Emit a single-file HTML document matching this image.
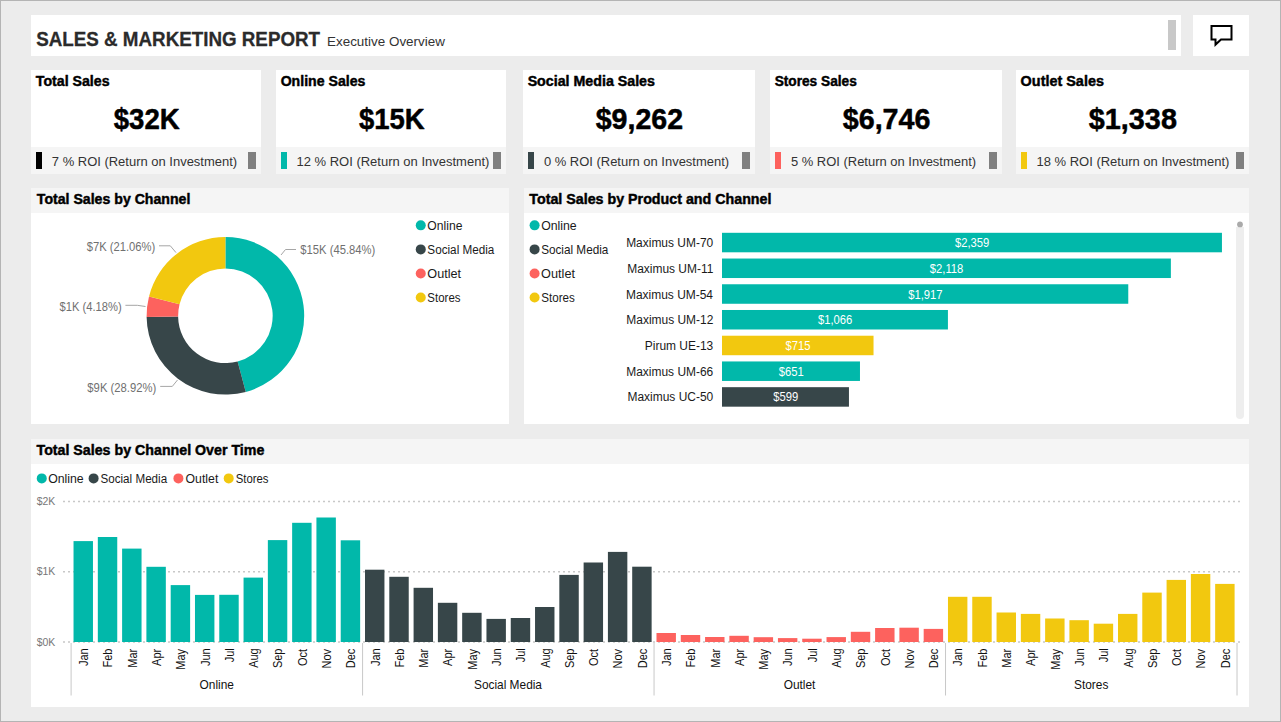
<!DOCTYPE html>
<html><head><meta charset="utf-8"><title>Sales &amp; Marketing Report</title>
<style>
html,body{margin:0;padding:0;}
body{width:1281px;height:722px;overflow:hidden;background:#ECECEC;position:relative;}
svg{position:absolute;left:0;top:0;display:block;}
text{font-family:"Liberation Sans", sans-serif;}
</style></head><body>
<svg width="1281" height="722" viewBox="0 0 1281 722" shape-rendering="crispEdges">
<rect x="0" y="0" width="1281" height="722" fill="#ECECEC"/>
<rect x="0.5" y="0.5" width="1280" height="721" fill="none" stroke="#B4B4B4" stroke-width="1"/>
<rect x="31" y="15" width="1150" height="41" fill="#FFFFFF"/>
<rect x="1168" y="20" width="8" height="30" fill="#C8C8C8"/>
<rect x="1193" y="15" width="56" height="41" fill="#FFFFFF"/>
<path d="M1211.5 26 H1231.5 V39.5 H1221 L1215.5 44.6 V39.5 H1211.5 Z" fill="none" stroke="#000" stroke-width="2" stroke-linejoin="miter" shape-rendering="geometricPrecision"/>
<rect x="31" y="70" width="230" height="77" fill="#FFFFFF"/>
<rect x="31" y="147" width="230" height="27" fill="#F5F5F5"/>
<rect x="36" y="152" width="6" height="17" fill="#000000"/>
<rect x="248" y="152" width="8" height="17" fill="#808080"/>
<rect x="276" y="70" width="230" height="77" fill="#FFFFFF"/>
<rect x="276" y="147" width="230" height="27" fill="#F5F5F5"/>
<rect x="281" y="152" width="6" height="17" fill="#01B8AA"/>
<rect x="493" y="152" width="8" height="17" fill="#808080"/>
<rect x="523" y="70" width="232" height="77" fill="#FFFFFF"/>
<rect x="523" y="147" width="232" height="27" fill="#F5F5F5"/>
<rect x="528" y="152" width="6" height="17" fill="#374649"/>
<rect x="742" y="152" width="8" height="17" fill="#808080"/>
<rect x="770" y="70" width="232" height="77" fill="#FFFFFF"/>
<rect x="770" y="147" width="232" height="27" fill="#F5F5F5"/>
<rect x="775" y="152" width="6" height="17" fill="#FD625E"/>
<rect x="989" y="152" width="8" height="17" fill="#808080"/>
<rect x="1016" y="70" width="233" height="77" fill="#FFFFFF"/>
<rect x="1016" y="147" width="233" height="27" fill="#F5F5F5"/>
<rect x="1021" y="152" width="6" height="17" fill="#F2C80F"/>
<rect x="1236" y="152" width="8" height="17" fill="#808080"/>
<rect x="31" y="188" width="478" height="236" fill="#FFFFFF"/>
<rect x="31" y="188" width="478" height="25" fill="#F5F5F5"/>
<rect x="524" y="188" width="725" height="236" fill="#FFFFFF"/>
<rect x="524" y="188" width="725" height="25" fill="#F5F5F5"/>
<rect x="31" y="439" width="1218" height="268" fill="#FFFFFF"/>
<rect x="31" y="439" width="1218" height="25" fill="#F5F5F5"/>
<circle cx="420.75" cy="225.35" r="5.0" fill="#01B8AA" shape-rendering="geometricPrecision"/>
<circle cx="534.6" cy="225.35" r="5.0" fill="#01B8AA" shape-rendering="geometricPrecision"/>
<circle cx="420.75" cy="249.40" r="5.0" fill="#374649" shape-rendering="geometricPrecision"/>
<circle cx="534.6" cy="249.40" r="5.0" fill="#374649" shape-rendering="geometricPrecision"/>
<circle cx="420.75" cy="273.45" r="5.0" fill="#FD625E" shape-rendering="geometricPrecision"/>
<circle cx="534.6" cy="273.45" r="5.0" fill="#FD625E" shape-rendering="geometricPrecision"/>
<circle cx="420.75" cy="297.50" r="5.0" fill="#F2C80F" shape-rendering="geometricPrecision"/>
<circle cx="534.6" cy="297.50" r="5.0" fill="#F2C80F" shape-rendering="geometricPrecision"/>
<path d="M225.40 237.00 A78.8 78.8 0 0 1 245.76 391.92 L237.62 361.49 A47.3 47.3 0 0 0 225.40 268.50 Z" fill="#01B8AA" shape-rendering="geometricPrecision"/>
<path d="M245.76 391.92 A78.8 78.8 0 0 1 146.61 316.99 L178.11 316.51 A47.3 47.3 0 0 0 237.62 361.49 Z" fill="#374649" shape-rendering="geometricPrecision"/>
<path d="M146.61 316.99 A78.8 78.8 0 0 1 149.00 296.49 L179.54 304.21 A47.3 47.3 0 0 0 178.11 316.51 Z" fill="#FD625E" shape-rendering="geometricPrecision"/>
<path d="M149.00 296.49 A78.8 78.8 0 0 1 225.40 237.00 L225.40 268.50 A47.3 47.3 0 0 0 179.54 304.21 Z" fill="#F2C80F" shape-rendering="geometricPrecision"/>
<g fill="none" stroke="#A6A6A6" stroke-width="1" shape-rendering="geometricPrecision">
<polyline points="281,255 285.5,249.5 296,249.5"/>
<polyline points="159,245.8 170.3,245.8 176,252.6"/>
<polyline points="125.4,305.3 137.3,305.3 145.5,306.5"/>
<polyline points="160.2,386.4 172.3,386.4 177.5,380"/>
</g>
<rect x="722" y="232.80" width="499.94" height="19.5" fill="#01B8AA" shape-rendering="geometricPrecision"/>
<rect x="722" y="258.53" width="448.87" height="19.5" fill="#01B8AA" shape-rendering="geometricPrecision"/>
<rect x="722" y="284.26" width="406.27" height="19.5" fill="#01B8AA" shape-rendering="geometricPrecision"/>
<rect x="722" y="309.99" width="225.92" height="19.5" fill="#01B8AA" shape-rendering="geometricPrecision"/>
<rect x="722" y="335.72" width="151.53" height="19.5" fill="#F2C80F" shape-rendering="geometricPrecision"/>
<rect x="722" y="361.45" width="137.97" height="19.5" fill="#01B8AA" shape-rendering="geometricPrecision"/>
<rect x="722" y="387.18" width="126.95" height="19.5" fill="#374649" shape-rendering="geometricPrecision"/>
<rect x="1236" y="227" width="8" height="192" rx="4" ry="4" fill="#EEEEEE" shape-rendering="geometricPrecision"/>
<rect x="1236" y="227" width="8" height="8" fill="#EEEEEE"/>
<circle cx="1240" cy="224.4" r="2.9" fill="#AAAAAA" shape-rendering="geometricPrecision"/>
<circle cx="41.75" cy="478.4" r="5.0" fill="#01B8AA" shape-rendering="geometricPrecision"/>
<circle cx="93.6" cy="478.4" r="5.0" fill="#374649" shape-rendering="geometricPrecision"/>
<circle cx="178.4" cy="478.4" r="5.0" fill="#FD625E" shape-rendering="geometricPrecision"/>
<circle cx="228.7" cy="478.4" r="5.0" fill="#F2C80F" shape-rendering="geometricPrecision"/>
<line x1="63" y1="501.5" x2="1241" y2="501.5" stroke="#C8C8C8" stroke-width="1.5" stroke-dasharray="2 3" shape-rendering="geometricPrecision"/>
<line x1="63" y1="571.75" x2="1241" y2="571.75" stroke="#C8C8C8" stroke-width="1.5" stroke-dasharray="2 3" shape-rendering="geometricPrecision"/>
<line x1="63" y1="642" x2="1241" y2="642" stroke="#C8C8C8" stroke-width="1.5" stroke-dasharray="2 3" shape-rendering="geometricPrecision"/>
<rect x="73.53" y="541.10" width="19.43" height="100.90" fill="#01B8AA" shape-rendering="geometricPrecision"/>
<rect x="97.82" y="537.00" width="19.43" height="105.00" fill="#01B8AA" shape-rendering="geometricPrecision"/>
<rect x="122.11" y="548.60" width="19.43" height="93.40" fill="#01B8AA" shape-rendering="geometricPrecision"/>
<rect x="146.40" y="566.80" width="19.43" height="75.20" fill="#01B8AA" shape-rendering="geometricPrecision"/>
<rect x="170.69" y="585.10" width="19.43" height="56.90" fill="#01B8AA" shape-rendering="geometricPrecision"/>
<rect x="194.98" y="594.90" width="19.43" height="47.10" fill="#01B8AA" shape-rendering="geometricPrecision"/>
<rect x="219.27" y="594.80" width="19.43" height="47.20" fill="#01B8AA" shape-rendering="geometricPrecision"/>
<rect x="243.56" y="577.60" width="19.43" height="64.40" fill="#01B8AA" shape-rendering="geometricPrecision"/>
<rect x="267.85" y="540.10" width="19.43" height="101.90" fill="#01B8AA" shape-rendering="geometricPrecision"/>
<rect x="292.14" y="522.80" width="19.43" height="119.20" fill="#01B8AA" shape-rendering="geometricPrecision"/>
<rect x="316.43" y="517.50" width="19.43" height="124.50" fill="#01B8AA" shape-rendering="geometricPrecision"/>
<rect x="340.72" y="540.30" width="19.43" height="101.70" fill="#01B8AA" shape-rendering="geometricPrecision"/>
<rect x="365.01" y="569.70" width="19.43" height="72.30" fill="#374649" shape-rendering="geometricPrecision"/>
<rect x="389.30" y="576.80" width="19.43" height="65.20" fill="#374649" shape-rendering="geometricPrecision"/>
<rect x="413.59" y="587.80" width="19.43" height="54.20" fill="#374649" shape-rendering="geometricPrecision"/>
<rect x="437.88" y="602.80" width="19.43" height="39.20" fill="#374649" shape-rendering="geometricPrecision"/>
<rect x="462.17" y="612.80" width="19.43" height="29.20" fill="#374649" shape-rendering="geometricPrecision"/>
<rect x="486.46" y="618.90" width="19.43" height="23.10" fill="#374649" shape-rendering="geometricPrecision"/>
<rect x="510.75" y="618.00" width="19.43" height="24.00" fill="#374649" shape-rendering="geometricPrecision"/>
<rect x="535.04" y="607.00" width="19.43" height="35.00" fill="#374649" shape-rendering="geometricPrecision"/>
<rect x="559.33" y="574.90" width="19.43" height="67.10" fill="#374649" shape-rendering="geometricPrecision"/>
<rect x="583.62" y="562.50" width="19.43" height="79.50" fill="#374649" shape-rendering="geometricPrecision"/>
<rect x="607.91" y="551.90" width="19.43" height="90.10" fill="#374649" shape-rendering="geometricPrecision"/>
<rect x="632.20" y="566.70" width="19.43" height="75.30" fill="#374649" shape-rendering="geometricPrecision"/>
<rect x="656.49" y="633.00" width="19.43" height="9.00" fill="#FD625E" shape-rendering="geometricPrecision"/>
<rect x="680.78" y="635.00" width="19.43" height="7.00" fill="#FD625E" shape-rendering="geometricPrecision"/>
<rect x="705.07" y="637.00" width="19.43" height="5.00" fill="#FD625E" shape-rendering="geometricPrecision"/>
<rect x="729.36" y="635.80" width="19.43" height="6.20" fill="#FD625E" shape-rendering="geometricPrecision"/>
<rect x="753.65" y="637.20" width="19.43" height="4.80" fill="#FD625E" shape-rendering="geometricPrecision"/>
<rect x="777.94" y="638.10" width="19.43" height="3.90" fill="#FD625E" shape-rendering="geometricPrecision"/>
<rect x="802.23" y="638.70" width="19.43" height="3.30" fill="#FD625E" shape-rendering="geometricPrecision"/>
<rect x="826.52" y="637.10" width="19.43" height="4.90" fill="#FD625E" shape-rendering="geometricPrecision"/>
<rect x="850.81" y="631.80" width="19.43" height="10.20" fill="#FD625E" shape-rendering="geometricPrecision"/>
<rect x="875.10" y="628.00" width="19.43" height="14.00" fill="#FD625E" shape-rendering="geometricPrecision"/>
<rect x="899.39" y="627.70" width="19.43" height="14.30" fill="#FD625E" shape-rendering="geometricPrecision"/>
<rect x="923.68" y="628.90" width="19.43" height="13.10" fill="#FD625E" shape-rendering="geometricPrecision"/>
<rect x="947.97" y="596.80" width="19.43" height="45.20" fill="#F2C80F" shape-rendering="geometricPrecision"/>
<rect x="972.26" y="596.80" width="19.43" height="45.20" fill="#F2C80F" shape-rendering="geometricPrecision"/>
<rect x="996.55" y="612.50" width="19.43" height="29.50" fill="#F2C80F" shape-rendering="geometricPrecision"/>
<rect x="1020.84" y="613.90" width="19.43" height="28.10" fill="#F2C80F" shape-rendering="geometricPrecision"/>
<rect x="1045.13" y="618.50" width="19.43" height="23.50" fill="#F2C80F" shape-rendering="geometricPrecision"/>
<rect x="1069.42" y="620.20" width="19.43" height="21.80" fill="#F2C80F" shape-rendering="geometricPrecision"/>
<rect x="1093.71" y="623.70" width="19.43" height="18.30" fill="#F2C80F" shape-rendering="geometricPrecision"/>
<rect x="1118.00" y="613.90" width="19.43" height="28.10" fill="#F2C80F" shape-rendering="geometricPrecision"/>
<rect x="1142.29" y="592.60" width="19.43" height="49.40" fill="#F2C80F" shape-rendering="geometricPrecision"/>
<rect x="1166.58" y="579.90" width="19.43" height="62.10" fill="#F2C80F" shape-rendering="geometricPrecision"/>
<rect x="1190.87" y="574.00" width="19.43" height="68.00" fill="#F2C80F" shape-rendering="geometricPrecision"/>
<rect x="1215.16" y="583.90" width="19.43" height="58.10" fill="#F2C80F" shape-rendering="geometricPrecision"/>
<line x1="71.10" y1="643" x2="71.10" y2="695.5" stroke="#C8C8C8" stroke-width="1" shape-rendering="geometricPrecision"/>
<line x1="362.58" y1="643" x2="362.58" y2="695.5" stroke="#C8C8C8" stroke-width="1" shape-rendering="geometricPrecision"/>
<line x1="654.06" y1="643" x2="654.06" y2="695.5" stroke="#C8C8C8" stroke-width="1" shape-rendering="geometricPrecision"/>
<line x1="945.54" y1="643" x2="945.54" y2="695.5" stroke="#C8C8C8" stroke-width="1" shape-rendering="geometricPrecision"/>
<line x1="1237.02" y1="643" x2="1237.02" y2="695.5" stroke="#C8C8C8" stroke-width="1" shape-rendering="geometricPrecision"/>
<text transform="translate(36.27,45.60) scale(0.9368,1)" font-size="20.058" font-weight="bold" fill="#2B2B2B" stroke="#2B2B2B" stroke-width="0.3" stroke-linejoin="round">SALES &amp; MARKETING REPORT</text>
<text transform="translate(327.03,45.60) scale(0.9887,1)" font-size="13.590" font-weight="normal" fill="#333333">Executive Overview</text>
<text transform="translate(35.81,85.90) scale(0.9746,1)" font-size="14.535" font-weight="bold" fill="#000000" stroke="#000000" stroke-width="0.45" stroke-linejoin="round">Total Sales</text>
<text transform="translate(113.73,129.10) scale(0.9398,1)" font-size="29.360" font-weight="bold" fill="#000000" stroke="#000000" stroke-width="0.5" stroke-linejoin="round">$32K</text>
<text transform="translate(51.81,165.60) scale(0.9934,1)" font-size="13.081" font-weight="normal" fill="#333333">7 % ROI (Return on Investment)</text>
<text transform="translate(280.64,85.90) scale(0.9716,1)" font-size="14.535" font-weight="bold" fill="#000000" stroke="#000000" stroke-width="0.45" stroke-linejoin="round">Online Sales</text>
<text transform="translate(358.93,129.10) scale(0.9354,1)" font-size="29.360" font-weight="bold" fill="#000000" stroke="#000000" stroke-width="0.5" stroke-linejoin="round">$15K</text>
<text transform="translate(296.45,165.60) scale(0.9949,1)" font-size="13.081" font-weight="normal" fill="#333333">12 % ROI (Return on Investment)</text>
<text transform="translate(527.63,85.90) scale(0.9793,1)" font-size="14.535" font-weight="bold" fill="#000000" stroke="#000000" stroke-width="0.45" stroke-linejoin="round">Social Media Sales</text>
<text transform="translate(595.72,129.10) scale(0.9731,1)" font-size="29.360" font-weight="bold" fill="#000000" stroke="#000000" stroke-width="0.5" stroke-linejoin="round">$9,262</text>
<text transform="translate(543.88,165.60) scale(0.9925,1)" font-size="13.081" font-weight="normal" fill="#333333">0 % ROI (Return on Investment)</text>
<text transform="translate(774.64,85.90) scale(0.9426,1)" font-size="14.535" font-weight="bold" fill="#000000" stroke="#000000" stroke-width="0.45" stroke-linejoin="round">Stores Sales</text>
<text transform="translate(842.72,129.10) scale(0.9776,1)" font-size="29.360" font-weight="bold" fill="#000000" stroke="#000000" stroke-width="0.5" stroke-linejoin="round">$6,746</text>
<text transform="translate(790.88,165.60) scale(0.9925,1)" font-size="13.081" font-weight="normal" fill="#333333">5 % ROI (Return on Investment)</text>
<text transform="translate(1020.62,85.90) scale(0.9922,1)" font-size="14.535" font-weight="bold" fill="#000000" stroke="#000000" stroke-width="0.45" stroke-linejoin="round">Outlet Sales</text>
<text transform="translate(1088.82,129.10) scale(0.9811,1)" font-size="29.360" font-weight="bold" fill="#000000" stroke="#000000" stroke-width="0.5" stroke-linejoin="round">$1,338</text>
<text transform="translate(1036.45,165.60) scale(0.9949,1)" font-size="13.081" font-weight="normal" fill="#333333">18 % ROI (Return on Investment)</text>
<text transform="translate(36.81,203.70) scale(0.9720,1)" font-size="14.535" font-weight="bold" fill="#000000" stroke="#000000" stroke-width="0.45" stroke-linejoin="round">Total Sales by Channel</text>
<text transform="translate(529.31,203.70) scale(0.9815,1)" font-size="14.535" font-weight="bold" fill="#000000" stroke="#000000" stroke-width="0.45" stroke-linejoin="round">Total Sales by Product and Channel</text>
<text transform="translate(36.51,454.90) scale(0.9786,1)" font-size="14.535" font-weight="bold" fill="#000000" stroke="#000000" stroke-width="0.45" stroke-linejoin="round">Total Sales by Channel Over Time</text>
<text transform="translate(427.33,229.95) scale(0.9130,1)" font-size="13.299" font-weight="normal" fill="#1A1A1A">Online</text>
<text transform="translate(541.13,229.95) scale(0.9238,1)" font-size="13.299" font-weight="normal" fill="#1A1A1A">Online</text>
<text transform="translate(427.35,254.00) scale(0.8816,1)" font-size="13.299" font-weight="normal" fill="#1A1A1A">Social Media</text>
<text transform="translate(541.15,254.00) scale(0.8830,1)" font-size="13.299" font-weight="normal" fill="#1A1A1A">Social Media</text>
<text transform="translate(427.31,278.05) scale(0.9524,1)" font-size="13.299" font-weight="normal" fill="#1A1A1A">Outlet</text>
<text transform="translate(541.11,278.05) scale(0.9552,1)" font-size="13.299" font-weight="normal" fill="#1A1A1A">Outlet</text>
<text transform="translate(427.36,302.10) scale(0.8626,1)" font-size="13.299" font-weight="normal" fill="#1A1A1A">Stores</text>
<text transform="translate(541.16,302.10) scale(0.8760,1)" font-size="13.299" font-weight="normal" fill="#1A1A1A">Stores</text>
<text transform="translate(300.35,253.80) scale(0.8787,1)" font-size="12.791" font-weight="normal" fill="#707070">$15K (45.84%)</text>
<text transform="translate(86.65,250.60) scale(0.8789,1)" font-size="12.791" font-weight="normal" fill="#707070">$7K (21.06%)</text>
<text transform="translate(59.55,310.70) scale(0.8746,1)" font-size="12.791" font-weight="normal" fill="#707070">$1K (4.18%)</text>
<text transform="translate(87.35,391.80) scale(0.8828,1)" font-size="12.791" font-weight="normal" fill="#707070">$9K (28.92%)</text>
<text transform="translate(626.14,247.05) scale(0.9000,1)" font-size="13.299" font-weight="normal" fill="#1A1A1A">Maximus UM-70</text>
<text transform="translate(954.94,247.05) scale(0.8900,1)" font-size="12.645" font-weight="normal" fill="#FFFFFF">$2,359</text>
<text transform="translate(627.18,272.78) scale(0.9000,1)" font-size="13.299" font-weight="normal" fill="#1A1A1A">Maximus UM-11</text>
<text transform="translate(929.81,272.78) scale(0.8900,1)" font-size="12.645" font-weight="normal" fill="#FFFFFF">$2,118</text>
<text transform="translate(625.98,298.51) scale(0.9000,1)" font-size="13.299" font-weight="normal" fill="#1A1A1A">Maximus UM-54</text>
<text transform="translate(908.14,298.51) scale(0.8900,1)" font-size="12.645" font-weight="normal" fill="#FFFFFF">$1,917</text>
<text transform="translate(626.30,324.24) scale(0.9000,1)" font-size="13.299" font-weight="normal" fill="#1A1A1A">Maximus UM-12</text>
<text transform="translate(817.93,324.24) scale(0.8900,1)" font-size="12.645" font-weight="normal" fill="#FFFFFF">$1,066</text>
<text transform="translate(644.81,349.97) scale(0.9000,1)" font-size="13.299" font-weight="normal" fill="#1A1A1A">Pirum UE-13</text>
<text transform="translate(785.42,349.97) scale(0.8900,1)" font-size="12.645" font-weight="normal" fill="#FFFFFF">$715</text>
<text transform="translate(626.22,375.70) scale(0.9000,1)" font-size="13.299" font-weight="normal" fill="#1A1A1A">Maximus UM-66</text>
<text transform="translate(778.68,375.70) scale(0.8900,1)" font-size="12.645" font-weight="normal" fill="#FFFFFF">$651</text>
<text transform="translate(627.50,401.43) scale(0.9000,1)" font-size="13.299" font-weight="normal" fill="#1A1A1A">Maximus UC-50</text>
<text transform="translate(773.13,401.43) scale(0.8900,1)" font-size="12.645" font-weight="normal" fill="#FFFFFF">$599</text>
<text transform="translate(48.18,483.00) scale(0.9251,1)" font-size="13.299" font-weight="normal" fill="#1A1A1A">Online</text>
<text transform="translate(100.46,483.00) scale(0.8763,1)" font-size="13.299" font-weight="normal" fill="#1A1A1A">Social Media</text>
<text transform="translate(185.53,483.00) scale(0.9236,1)" font-size="13.299" font-weight="normal" fill="#1A1A1A">Outlet</text>
<text transform="translate(235.67,483.00) scale(0.8546,1)" font-size="13.299" font-weight="normal" fill="#1A1A1A">Stores</text>
<text transform="translate(36.66,505.10) scale(0.9000,1)" font-size="11.628" font-weight="normal" fill="#777777">$2K</text>
<text transform="translate(36.66,575.35) scale(0.9000,1)" font-size="11.628" font-weight="normal" fill="#777777">$1K</text>
<text transform="translate(36.66,645.60) scale(0.9000,1)" font-size="11.628" font-weight="normal" fill="#777777">$0K</text>
<text transform="translate(88.04,649.00) rotate(-90) translate(-17.00,0) scale(0.8400,1)" font-size="13.081" font-weight="normal" fill="#111111">Jan</text>
<text transform="translate(112.33,649.00) rotate(-90) translate(-18.46,0) scale(0.8400,1)" font-size="13.081" font-weight="normal" fill="#111111">Feb</text>
<text transform="translate(136.62,649.00) rotate(-90) translate(-18.75,0) scale(0.8400,1)" font-size="13.081" font-weight="normal" fill="#111111">Mar</text>
<text transform="translate(160.92,649.00) rotate(-90) translate(-16.92,0) scale(0.8400,1)" font-size="13.081" font-weight="normal" fill="#111111">Apr</text>
<text transform="translate(185.21,649.00) rotate(-90) translate(-20.73,0) scale(0.8400,1)" font-size="13.081" font-weight="normal" fill="#111111">May</text>
<text transform="translate(209.50,649.00) rotate(-90) translate(-17.00,0) scale(0.8400,1)" font-size="13.081" font-weight="normal" fill="#111111">Jun</text>
<text transform="translate(233.79,649.00) rotate(-90) translate(-13.33,0) scale(0.8400,1)" font-size="13.081" font-weight="normal" fill="#111111">Jul</text>
<text transform="translate(258.07,649.00) rotate(-90) translate(-18.83,0) scale(0.8400,1)" font-size="13.081" font-weight="normal" fill="#111111">Aug</text>
<text transform="translate(282.36,649.00) rotate(-90) translate(-19.12,0) scale(0.8400,1)" font-size="13.081" font-weight="normal" fill="#111111">Sep</text>
<text transform="translate(306.65,649.00) rotate(-90) translate(-17.00,0) scale(0.8400,1)" font-size="13.081" font-weight="normal" fill="#111111">Oct</text>
<text transform="translate(330.94,649.00) rotate(-90) translate(-19.49,0) scale(0.8400,1)" font-size="13.081" font-weight="normal" fill="#111111">Nov</text>
<text transform="translate(355.23,649.00) rotate(-90) translate(-19.27,0) scale(0.8400,1)" font-size="13.081" font-weight="normal" fill="#111111">Dec</text>
<text transform="translate(199.62,689.20) scale(0.9200,1)" font-size="12.936" font-weight="normal" fill="#111111">Online</text>
<text transform="translate(379.53,649.00) rotate(-90) translate(-17.00,0) scale(0.8400,1)" font-size="13.081" font-weight="normal" fill="#111111">Jan</text>
<text transform="translate(403.81,649.00) rotate(-90) translate(-18.46,0) scale(0.8400,1)" font-size="13.081" font-weight="normal" fill="#111111">Feb</text>
<text transform="translate(428.10,649.00) rotate(-90) translate(-18.75,0) scale(0.8400,1)" font-size="13.081" font-weight="normal" fill="#111111">Mar</text>
<text transform="translate(452.39,649.00) rotate(-90) translate(-16.92,0) scale(0.8400,1)" font-size="13.081" font-weight="normal" fill="#111111">Apr</text>
<text transform="translate(476.69,649.00) rotate(-90) translate(-20.73,0) scale(0.8400,1)" font-size="13.081" font-weight="normal" fill="#111111">May</text>
<text transform="translate(500.97,649.00) rotate(-90) translate(-17.00,0) scale(0.8400,1)" font-size="13.081" font-weight="normal" fill="#111111">Jun</text>
<text transform="translate(525.26,649.00) rotate(-90) translate(-13.33,0) scale(0.8400,1)" font-size="13.081" font-weight="normal" fill="#111111">Jul</text>
<text transform="translate(549.55,649.00) rotate(-90) translate(-18.83,0) scale(0.8400,1)" font-size="13.081" font-weight="normal" fill="#111111">Aug</text>
<text transform="translate(573.84,649.00) rotate(-90) translate(-19.12,0) scale(0.8400,1)" font-size="13.081" font-weight="normal" fill="#111111">Sep</text>
<text transform="translate(598.13,649.00) rotate(-90) translate(-17.00,0) scale(0.8400,1)" font-size="13.081" font-weight="normal" fill="#111111">Oct</text>
<text transform="translate(622.42,649.00) rotate(-90) translate(-19.49,0) scale(0.8400,1)" font-size="13.081" font-weight="normal" fill="#111111">Nov</text>
<text transform="translate(646.71,649.00) rotate(-90) translate(-19.27,0) scale(0.8400,1)" font-size="13.081" font-weight="normal" fill="#111111">Dec</text>
<text transform="translate(473.97,689.20) scale(0.9200,1)" font-size="12.936" font-weight="normal" fill="#111111">Social Media</text>
<text transform="translate(671.00,649.00) rotate(-90) translate(-17.00,0) scale(0.8400,1)" font-size="13.081" font-weight="normal" fill="#111111">Jan</text>
<text transform="translate(695.29,649.00) rotate(-90) translate(-18.46,0) scale(0.8400,1)" font-size="13.081" font-weight="normal" fill="#111111">Feb</text>
<text transform="translate(719.58,649.00) rotate(-90) translate(-18.75,0) scale(0.8400,1)" font-size="13.081" font-weight="normal" fill="#111111">Mar</text>
<text transform="translate(743.87,649.00) rotate(-90) translate(-16.92,0) scale(0.8400,1)" font-size="13.081" font-weight="normal" fill="#111111">Apr</text>
<text transform="translate(768.16,649.00) rotate(-90) translate(-20.73,0) scale(0.8400,1)" font-size="13.081" font-weight="normal" fill="#111111">May</text>
<text transform="translate(792.45,649.00) rotate(-90) translate(-17.00,0) scale(0.8400,1)" font-size="13.081" font-weight="normal" fill="#111111">Jun</text>
<text transform="translate(816.74,649.00) rotate(-90) translate(-13.33,0) scale(0.8400,1)" font-size="13.081" font-weight="normal" fill="#111111">Jul</text>
<text transform="translate(841.03,649.00) rotate(-90) translate(-18.83,0) scale(0.8400,1)" font-size="13.081" font-weight="normal" fill="#111111">Aug</text>
<text transform="translate(865.32,649.00) rotate(-90) translate(-19.12,0) scale(0.8400,1)" font-size="13.081" font-weight="normal" fill="#111111">Sep</text>
<text transform="translate(889.61,649.00) rotate(-90) translate(-17.00,0) scale(0.8400,1)" font-size="13.081" font-weight="normal" fill="#111111">Oct</text>
<text transform="translate(913.90,649.00) rotate(-90) translate(-19.49,0) scale(0.8400,1)" font-size="13.081" font-weight="normal" fill="#111111">Nov</text>
<text transform="translate(938.19,649.00) rotate(-90) translate(-19.27,0) scale(0.8400,1)" font-size="13.081" font-weight="normal" fill="#111111">Dec</text>
<text transform="translate(783.69,689.20) scale(0.9200,1)" font-size="12.936" font-weight="normal" fill="#111111">Outlet</text>
<text transform="translate(962.48,649.00) rotate(-90) translate(-17.00,0) scale(0.8400,1)" font-size="13.081" font-weight="normal" fill="#111111">Jan</text>
<text transform="translate(986.77,649.00) rotate(-90) translate(-18.46,0) scale(0.8400,1)" font-size="13.081" font-weight="normal" fill="#111111">Feb</text>
<text transform="translate(1011.06,649.00) rotate(-90) translate(-18.75,0) scale(0.8400,1)" font-size="13.081" font-weight="normal" fill="#111111">Mar</text>
<text transform="translate(1035.36,649.00) rotate(-90) translate(-16.92,0) scale(0.8400,1)" font-size="13.081" font-weight="normal" fill="#111111">Apr</text>
<text transform="translate(1059.64,649.00) rotate(-90) translate(-20.73,0) scale(0.8400,1)" font-size="13.081" font-weight="normal" fill="#111111">May</text>
<text transform="translate(1083.93,649.00) rotate(-90) translate(-17.00,0) scale(0.8400,1)" font-size="13.081" font-weight="normal" fill="#111111">Jun</text>
<text transform="translate(1108.22,649.00) rotate(-90) translate(-13.33,0) scale(0.8400,1)" font-size="13.081" font-weight="normal" fill="#111111">Jul</text>
<text transform="translate(1132.51,649.00) rotate(-90) translate(-18.83,0) scale(0.8400,1)" font-size="13.081" font-weight="normal" fill="#111111">Aug</text>
<text transform="translate(1156.80,649.00) rotate(-90) translate(-19.12,0) scale(0.8400,1)" font-size="13.081" font-weight="normal" fill="#111111">Sep</text>
<text transform="translate(1181.09,649.00) rotate(-90) translate(-17.00,0) scale(0.8400,1)" font-size="13.081" font-weight="normal" fill="#111111">Oct</text>
<text transform="translate(1205.38,649.00) rotate(-90) translate(-19.49,0) scale(0.8400,1)" font-size="13.081" font-weight="normal" fill="#111111">Nov</text>
<text transform="translate(1229.67,649.00) rotate(-90) translate(-19.27,0) scale(0.8400,1)" font-size="13.081" font-weight="normal" fill="#111111">Dec</text>
<text transform="translate(1074.02,689.20) scale(0.9200,1)" font-size="12.936" font-weight="normal" fill="#111111">Stores</text>
</svg></body></html>
